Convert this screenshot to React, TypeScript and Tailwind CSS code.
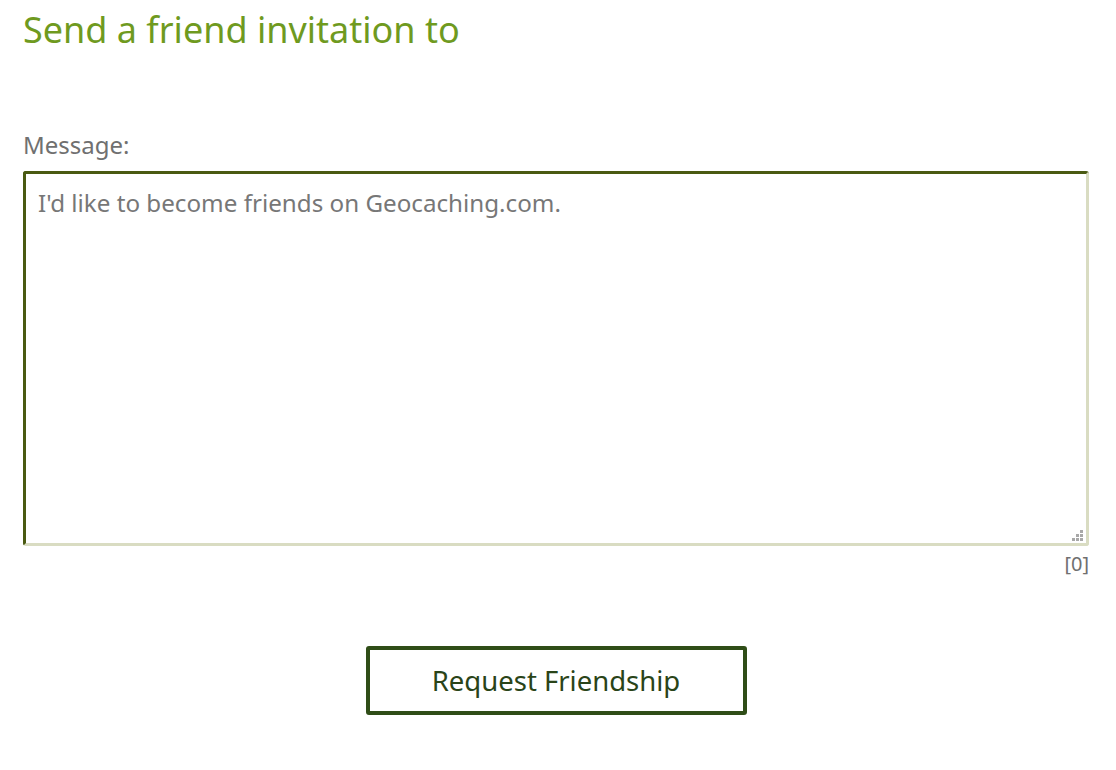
import React from 'react';

const GripDots: React.FC = () => (
  <svg width="11" height="11" viewBox="0 0 11 11" className="pointer-events-none absolute bottom-[5px] right-[6px]">
    <rect x="8" y="0" width="3" height="3" fill="#a8a8a8" />
    <rect x="4" y="4" width="3" height="3" fill="#a8a8a8" />
    <rect x="8" y="4" width="3" height="3" fill="#a8a8a8" />
    <rect x="0" y="8" width="3" height="3" fill="#a8a8a8" />
    <rect x="4" y="8" width="3" height="3" fill="#a8a8a8" />
    <rect x="8" y="8" width="3" height="3" fill="#a8a8a8" />
  </svg>
);

const App: React.FC = () => {
  return (
    <div className="min-h-[770px] w-full bg-white pl-[23px] pr-[27px] pt-[6px] font-['Noto_Sans','Open_Sans',sans-serif]">
      <h2 className="text-[36px] leading-[48px] text-[#6f9a1f]">Send a friend invitation to</h2>

      <div className="mt-[75px]">
        <label className="block text-[24px] leading-[32px] text-[#707070]">Message:</label>
        <div className="relative mt-[10px]">
          <textarea
            className="block h-[375px] w-full resize-none rounded-[3px] border-[3px] border-t-[#4a5a12] border-l-[#4a5a12] border-b-[#d9dcc2] border-r-[#d9dcc2] px-[12px] pt-[13px] pb-[11px] text-[24.2px] leading-[32px] text-[#555] placeholder:text-[#777] outline-none"
            placeholder="I'd like to become friends on Geocaching.com."
          />
          <GripDots />
        </div>
        <div className="mt-[4px] text-right text-[20px] leading-[28px] text-[#707070]">[0]</div>
      </div>

      <div className="mt-[68px] flex justify-center">
        <button className="h-[69px] w-[381px] rounded-[3px] border-[4px] border-[#2f4d17] bg-white text-[27.5px] text-[#2a4418]">
          Request Friendship
        </button>
      </div>
    </div>
  );
};

export default App;
